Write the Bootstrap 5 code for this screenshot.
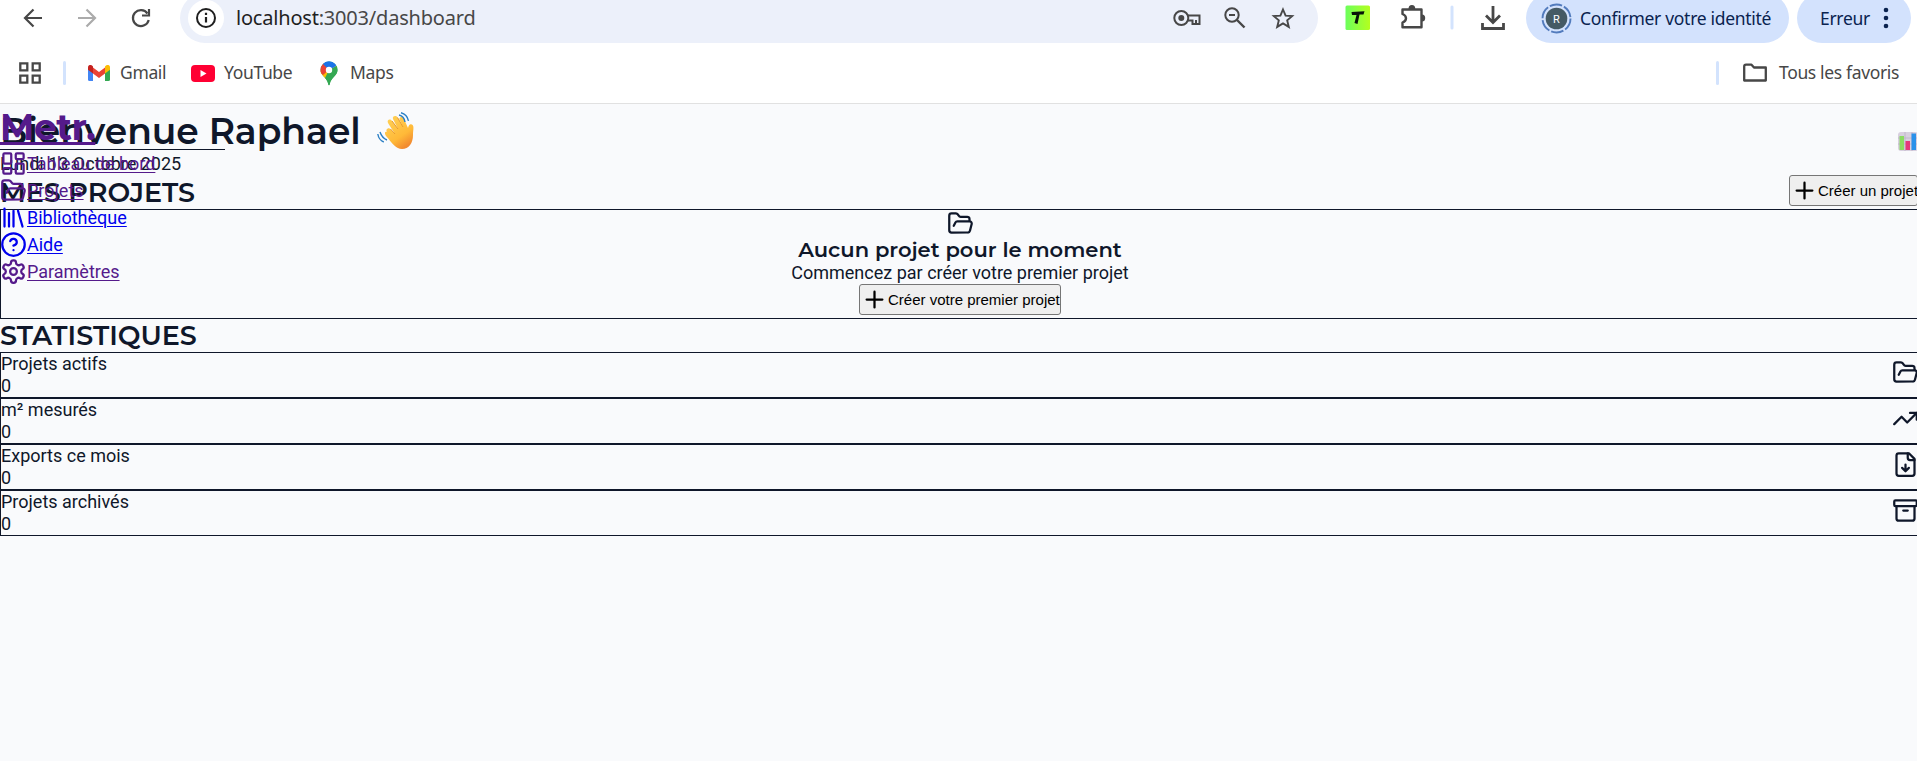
<!DOCTYPE html>
<html lang="fr">
<head>
<meta charset="utf-8">
<title>Metr. – Tableau de bord</title>
<link href="https://cdn.jsdelivr.net/npm/bootstrap@5.3.0/dist/css/bootstrap.min.css" rel="stylesheet">
<style>
body{background:#f9fafc;color:#0f172a;font-family:Roboto,sans-serif;font-size:18px;line-height:22px;width:1917px;height:761px;overflow:hidden}
svg{display:block;flex:none}
.chrome{display:flow-root;height:104px;background:#fff;border-bottom:1px solid #e1e1e1;font-family:"Noto Sans","Open Sans",sans-serif;color:#474747}
.toolrow{height:50px;margin-top:-7px}
.omni{width:1138px;height:50px;border-radius:25px;background:#ecf0fa;margin-left:26px}
.site-info{width:36px;height:36px;margin-left:8px}
.url{font-size:20px;letter-spacing:-.2px;margin-left:12px;white-space:nowrap}
.url b{font-weight:400;color:#1f1f1f}
.sep{width:3px;height:24px;border-radius:2px;background:#d3e3fd;flex:none}
.chip{height:50px;border-radius:25px;background:#d3e2fd;color:#0a2350;white-space:nowrap}
.chip-t{font-size:17.500px;letter-spacing:-.3px}
.favs{height:60px}
.fav-t{font-size:17.500px;letter-spacing:-.35px;white-space:nowrap;line-height:24px;margin-top:-2px}
.lucide{width:27px;height:27px;fill:none;stroke:currentColor;stroke-width:2;stroke-linecap:round;stroke-linejoin:round}
.display{font-family:Montserrat,Inter,sans-serif;font-weight:600;margin:0;white-space:nowrap}
.hello{font-size:36px;line-height:44px}
.sec{font-size:27px;line-height:33px}
.mini{font-size:21.060px;line-height:26px}
.box{border:1px solid #0f172a;width:1918px}
.plain-btn{height:31px;border:1px solid #767676;border-radius:3px;background:#efefef;color:#000;font:15px "Liberation Sans",Arial,sans-serif;padding:0 0 0 1px;white-space:nowrap}
.side{position:absolute;left:0;top:104px;width:225px}
.logo{height:46px;border-bottom:1px solid #0f172a}
.logo a{display:block;font-size:36px;font-weight:700;letter-spacing:-.4px;line-height:44px;padding-top:1px;color:#551a8b;text-decoration-thickness:3px;text-underline-offset:2px}
.side-link{height:27px;line-height:27px;color:#551a8b;text-decoration:none}
.side-link span{text-decoration:underline;text-decoration-thickness:1px;text-underline-offset:2px}
.side-link.fresh{color:#0000ee}
</style>
</head>
<body>
<header class="chrome">
  <div class="toolrow d-flex align-items-center">
    <svg width="154" height="36" viewBox="0 0 154 36" fill="none" stroke-width="2.2">
      <path d="M42 18H25M33.500 9.500 25 18l8.500 8.500" stroke="#474747"/>
      <path d="M78 18H95M86.500 9.500 95 18l-8.500 8.500" stroke="#ababab"/>
      <path d="M147.500 13.500A8 8 0 1 0 148.700 20" stroke="#474747"/><path d="M149 9v6.500H142" stroke="#474747"/>
    </svg>
    <div class="omni d-flex align-items-center">
      <svg class="site-info" viewBox="0 0 36 36"><circle cx="18" cy="18" r="18" fill="#fff"/><circle cx="18" cy="18" r="9" fill="none" stroke="#1f1f1f" stroke-width="2"/><path d="M18 17v5.500M18 12.700v2.300" stroke="#1f1f1f" stroke-width="2.200"/></svg>
      <span class="url"><b>localhost</b>:3003/dashboard</span>
      <svg class="ms-auto" style="margin-right:22px" width="124" height="36" viewBox="1172 0 124 36" fill="none" stroke="#474747" stroke-width="2">
        <circle cx="1181.300" cy="18" r="7"/><circle cx="1181.300" cy="18" r="3" fill="#474747" stroke="none"/><path d="M1187.500 15.500H1199.500V24H1192.500V20.500H1187.500M1196 24v-4"/>
        <circle cx="1232" cy="15" r="6.700"/><path d="m1237 20 7.500 7.500" stroke-width="2.400"/><path d="M1229 15h6"/>
        <path d="m1283 9.500 2.600 6.100 6.600.5-5 4.300 1.600 6.500-5.800-3.500-5.800 3.500 1.600-6.500-5-4.300 6.600-.5z" stroke-width="1.900"/>
      </svg>
    </div>
    <svg width="208" height="36" viewBox="1318 0 208 36" fill="none" stroke="#474747" stroke-width="2.400">
      <defs><linearGradient id="lime"><stop stop-color="#6cff5c"/><stop offset="1" stop-color="#b4ff1e"/></linearGradient></defs>
      <rect x="1345.500" y="5.500" width="24.500" height="24.500" rx="1.500" fill="url(#lime)" stroke="none"/>
      <path d="M1351.500 12 1364.500 11.300 1363.500 14.500 1359.500 14.500 1357.500 24 1354.500 23 1356.500 15 1352 15z" fill="#071307" stroke="none"/>
      <path d="M1402.500 9.500H1421.500V27.300H1402.500V22.500Q1406 21 1406 18.200T1402.500 14z" stroke-linejoin="round"/><path d="M1408.500 9a3.400 4 0 0 1 6.800 0zM1422 14.500a3.200 3.500 0 0 1 0 7z" fill="#474747" stroke="none"/>
      <rect x="1450.500" y="5.500" width="3" height="24" rx="1.500" fill="#d3e3fd" stroke="none"/>
      <path d="M1493 6v15M1486 15.500l7 7 7-7M1482.500 23v5.500H1503.500V23" stroke-width="2.800"/>
    </svg>
    <div class="chip d-flex align-items-center" style="width:263px;padding-left:15px">
      <svg width="31" height="31" viewBox="0 0 31 31"><circle cx="15.500" cy="15.500" r="14" fill="none" stroke="#527bbd" stroke-width="1.900" stroke-dasharray="12.600 2.060"/><circle cx="15.500" cy="15.500" r="10.800" fill="#455a64"/><text x="15.500" y="19.500" font-size="11" text-anchor="middle" fill="#fff" font-family="Roboto">R</text></svg>
      <span class="chip-t" style="margin-left:8px">Confirmer votre identité</span>
    </div>
    <div class="chip d-flex align-items-center" style="width:114px;margin-left:8px;padding-left:23px">
      <span class="chip-t" style="width:60px">Erreur</span>
      <svg width="12" height="24" viewBox="0 0 12 24" fill="#0a2350"><circle cx="6" cy="4" r="2.300"/><circle cx="6" cy="12" r="2.300"/><circle cx="6" cy="20" r="2.300"/></svg>
    </div>
  </div>
  <div class="favs d-flex align-items-center">
    <svg width="24" height="24" viewBox="0 0 24 24" style="margin-left:18px" fill="none" stroke="#474747" stroke-width="2.300"><path d="M2.300 2.300h7v7h-7zM14.700 2.300h7v7h-7zM2.300 14.700h7v7h-7zM14.700 14.700h7v7h-7z"/></svg>
    <div class="sep" style="margin-left:21px"></div>
    <svg width="22" height="16" viewBox="0 0 22 16" style="margin-left:22px"><path d="M0 3h5v13H1.500Q0 16 0 14.500z" fill="#4285f4"/><path d="M17 3h5v11.500Q22 16 20.500 16H17z" fill="#34a853"/><path d="M5 2.500 11 7l6-4.500v6L11 13 5 8.500z" fill="#ea4335"/><path d="M0 2.500C0 0 2.500-.7 4 .5l1 .9v7.100L0 4.800z" fill="#c5221f"/><path d="M22 2.500c0-2.500-2.500-3.200-4-2l-1 .9v7.100l5-3.700z" fill="#fbbc04"/></svg>
    <span class="fav-t" style="margin-left:10px;width:71px">Gmail</span>
    <svg width="24" height="17" viewBox="0 0 24 17"><rect width="24" height="17" rx="4" fill="#ff0033"/><path d="m9.500 5 6 3.500-6 3.500z" fill="#fff"/></svg>
    <span class="fav-t" style="margin-left:9px;width:96px">YouTube</span>
    <svg width="18" height="25" viewBox="0 0 18 25"><defs><clipPath id="pin"><path d="M9 .5a8.500 8.500 0 0 0-8.500 8.500C.5 15 7.200 16.500 8.200 23q.8 2.500 1.600 0C10.800 16.500 17.500 15 17.500 9A8.500 8.500 0 0 0 9 .5z"/></clipPath></defs><g clip-path="url(#pin)"><path d="M0 0h18v25H0z" fill="#34a853"/><path d="M0 17V10L9 9l4-5 5 1L4 20z" fill="#fbbc04"/><path d="M9 9 18 4v21H6l-2-6z" fill="#34a853"/><path d="M0 0h18v4L9 9 3 3z" fill="#4285f4"/><path d="M0 2h3l6 7-6 5-3-2z" fill="#ea4335"/><path d="m3 3 3-3 6 0 5 4-8 5z" fill="#1a73e8"/></g><circle cx="9" cy="9" r="3.200" fill="#fff"/></svg>
    <span class="fav-t" style="margin-left:12px">Maps</span>
    <div class="sep ms-auto"></div>
    <svg width="26" height="20" viewBox="0 0 26 20" style="margin-left:23px" fill="none" stroke="#474747" stroke-width="2.300" stroke-linejoin="round"><path d="M2.200 3.500V17.500H23.800V4.500H12L9.500 1.700H4q-1.800 0-1.800 1.800z"/></svg>
    <span class="fav-t" style="margin-left:11px;width:138px">Tous les favoris</span>
  </div>
</header>

<main style="width:1918px">
  <div class="d-flex justify-content-between">
    <div>
      <h1 class="display hello d-flex align-items-center" style="padding-top:5px"><span>Bienvenue Raphael</span>
        <svg style="margin-left:16px" width="38" height="38" viewBox="0 0 38 38"><defs><linearGradient id="skin" x1="0" y1="0" x2=".6" y2="1"><stop stop-color="#ffd45a"/><stop offset=".7" stop-color="#ffb938"/><stop offset="1" stop-color="#f28b30"/></linearGradient></defs><path d="M10 20C8 17 12 15 13.500 17L18 22 11 11C9.500 8 13 6 15 9L21 17 16 7C15 4 19 3 20.500 5.500L26 15 22.500 7.500C22 4.500 25.500 4 27 7L31 16Q32 11 35 12.500C37.500 14 36 18 36 23 36 31 32 37 25 37 19 37 16 32 9 24 7 21 8 19 10 20z" fill="url(#skin)"/><path d="M15 9l6 8M20.500 5.500 26 15M13.500 17l4.500 5" stroke="#e89a2c" fill="none"/><path d="M22 3q5 1 6 7M24 .8q6 1.500 7.500 8M3 20q2 6 7 8M.8 22q1 6 6 8" fill="none" stroke="#2b7fc4" stroke-width="1.400"/></svg>
      </h1>
      <div style="height:22px">Lundi 13 Octobre 2025</div>
    </div>
    <svg width="20" height="19" viewBox="0 0 20 19" style="margin-top:28px"><rect width="20" height="19" rx="3" fill="#d8d0df"/><path d="M0 6h20M0 12h20M7 0v19M14 0v19" stroke="#bdb3c7" stroke-width=".8"/><path d="M1.500 4h4.500v14H1.500z" fill="#8bdc62"/><path d="M7.500 9h4.500v9H7.500z" fill="#e5397b"/><path d="M13.500 1.500h4.500v16.500h-4.500z" fill="#2a91ea"/></svg>
  </div>
  <div class="d-flex justify-content-between align-items-center" style="height:34px">
    <h2 class="display sec">MES PROJETS</h2>
    <button class="plain-btn d-flex align-items-center" style="width:129px;margin-top:-3px"><svg class="lucide" viewBox="0 0 24 24"><path d="M5 12h14M12 5v14"/></svg><span>Créer un projet</span></button>
  </div>
  <section class="box d-flex flex-column align-items-center" style="height:110px;width:1920px">
    <svg class="lucide" viewBox="0 0 24 24"><use href="#fo"/></svg>
    <h3 class="display mini">Aucun projet pour le moment</h3>
    <div style="height:21px;line-height:19px">Commencez par créer votre premier projet</div>
    <button class="plain-btn d-flex align-items-center" style="width:202px"><svg class="lucide" viewBox="0 0 24 24"><path d="M5 12h14M12 5v14"/></svg><span>Créer votre premier projet</span></button>
  </section>
  <h2 class="display sec">STATISTIQUES</h2>
  <section class="box d-flex justify-content-between" style="height:46px"><div>Projets actifs<br>0</div><svg class="lucide" style="margin:6px -2px 0 0" viewBox="0 0 24 24"><path id="fo" d="m6 14 1.500-2.900A2 2 0 0 1 9.240 10H20a2 2 0 0 1 1.940 2.500l-1.540 6a2 2 0 0 1-1.950 1.500H4a2 2 0 0 1-2-2V5a2 2 0 0 1 2-2h3.900a2 2 0 0 1 1.690.9l.81 1.200a2 2 0 0 0 1.670.9H18a2 2 0 0 1 2 2v2"/></svg></section>
  <section class="box d-flex justify-content-between" style="height:46px"><div>m² mesurés<br>0</div><svg class="lucide" style="margin:6px -2px 0 0" viewBox="0 0 24 24"><path d="M16 7h6v6"/><path d="m22 7-8.500 8.500-5-5L2 17"/></svg></section>
  <section class="box d-flex justify-content-between" style="height:46px"><div>Exports ce mois<br>0</div><svg class="lucide" style="margin:6px -2px 0 0" viewBox="0 0 24 24"><path d="M15 2H6a2 2 0 0 0-2 2v16a2 2 0 0 0 2 2h12a2 2 0 0 0 2-2V7Z"/><path d="M14 2v4a2 2 0 0 0 2 2h4M12 18v-6m-3 3 3 3 3-3"/></svg></section>
  <section class="box d-flex justify-content-between" style="height:46px"><div>Projets archivés<br>0</div><svg class="lucide" style="margin:6px -2px 0 0" viewBox="0 0 24 24"><rect width="20" height="5" x="2" y="3" rx="1"/><path d="M4 8v11a2 2 0 0 0 2 2h12a2 2 0 0 0 2-2V8M10 12h4"/></svg></section>
</main>

<aside class="side">
  <div class="logo"><a href="#" class="display">Metr.</a></div>
  <nav class="d-flex flex-column">
    <a href="#" class="side-link d-flex"><svg class="lucide" viewBox="0 0 24 24"><rect width="7" height="9" x="3" y="3" rx="1"/><rect width="7" height="5" x="14" y="3" rx="1"/><rect width="7" height="9" x="14" y="12" rx="1"/><rect width="7" height="5" x="3" y="16" rx="1"/></svg><span>Tableau de bord</span></a>
    <a href="#" class="side-link d-flex"><svg class="lucide" viewBox="0 0 24 24"><use href="#fo"/></svg><span>Projets</span></a>
    <a href="#" class="side-link fresh d-flex"><svg class="lucide" viewBox="0 0 24 24"><path d="m16 6 4 14M12 6v14M8 8v12M4 4v16"/></svg><span>Bibliothèque</span></a>
    <a href="#" class="side-link fresh d-flex"><svg class="lucide" viewBox="0 0 24 24"><circle cx="12" cy="12" r="10"/><path d="M9.090 9a3 3 0 0 1 5.830 1c0 2-3 3-3 3M12 17h.01"/></svg><span>Aide</span></a>
    <a href="#" class="side-link d-flex"><svg class="lucide" viewBox="0 0 24 24"><path d="M12.220 2h-.44a2 2 0 0 0-2 2v.18a2 2 0 0 1-1 1.730l-.43.25a2 2 0 0 1-2 0l-.15-.08a2 2 0 0 0-2.730.73l-.22.38a2 2 0 0 0 .73 2.730l.15.1a2 2 0 0 1 1 1.720v.51a2 2 0 0 1-1 1.740l-.15.09a2 2 0 0 0-.73 2.730l.22.38a2 2 0 0 0 2.730.73l.15-.08a2 2 0 0 1 2 0l.43.25a2 2 0 0 1 1 1.730V20a2 2 0 0 0 2 2h.44a2 2 0 0 0 2-2v-.18a2 2 0 0 1 1-1.730l.43-.25a2 2 0 0 1 2 0l.15.08a2 2 0 0 0 2.730-.73l.22-.39a2 2 0 0 0-.73-2.730l-.15-.08a2 2 0 0 1-1-1.740v-.5a2 2 0 0 1 1-1.740l.15-.09a2 2 0 0 0 .73-2.730l-.22-.38a2 2 0 0 0-2.730-.73l-.15.08a2 2 0 0 1-2 0l-.43-.25a2 2 0 0 1-1-1.730V4a2 2 0 0 0-2-2z"/><circle cx="12" cy="12" r="3"/></svg><span>Paramètres</span></a>
  </nav>
</aside>
<script src="https://cdn.jsdelivr.net/npm/bootstrap@5.3.0/dist/js/bootstrap.bundle.min.js"></script>
</body>
</html>
